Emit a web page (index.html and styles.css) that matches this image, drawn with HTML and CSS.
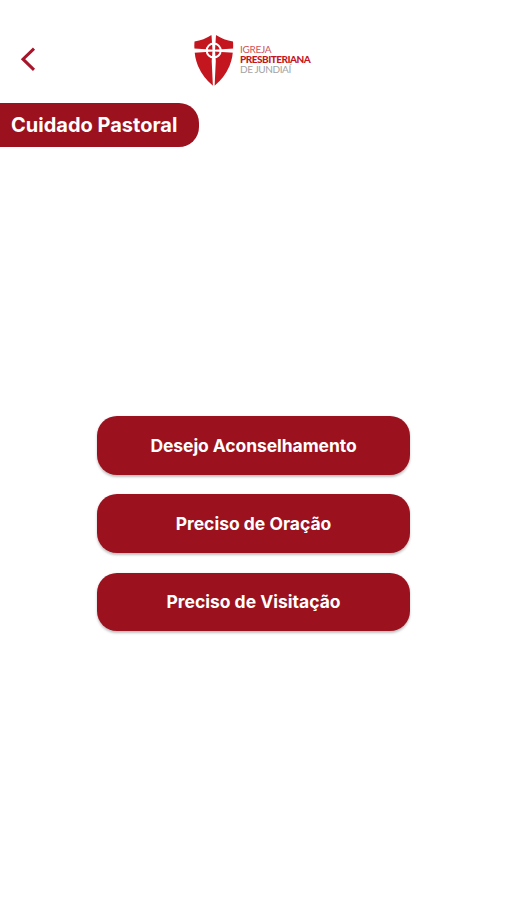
FILE: index.html
```html
<!DOCTYPE html>
<html lang="pt-BR">
<head>
    <meta charset="UTF-8">
    <meta name="viewport" content="width=device-width, initial-scale=1.0">
    <title>Cuidado Pastoral</title>
    <link rel="stylesheet" href="styles.css">
</head>
<body>
    <header class="header">
        <a href="#" class="back-btn" aria-label="Voltar">
            <svg width="16" height="24" viewBox="0 0 16 24" fill="none">
                <path d="M14 1.600L3 12.200L14 22.800" stroke="#a8142a" stroke-width="3"/>
            </svg>
        </a>
        <div class="logo">
            <svg class="shield" width="40" height="51" viewBox="0 0 40 51">
                <path d="M0.500 6.500Q10 5 17 0.300H22.500Q29.500 5 39 6.500Q40 20 35.500 31Q30.500 42.500 20.800 50.500H18.700Q9 42.500 4 31Q-0.500 20 0.500 6.500Z" fill="#c4161f"/>
                <path d="M17.500 0H22L21 15.500L21.800 26L20.600 51H18.900L17.700 26L18.500 15.500Z" fill="#fff"/>
                <path d="M0 13.500L19.700 14.700L40 13.500V17.700L19.700 16.500L0 17.700Z" fill="#fff"/>
                <circle cx="19.700" cy="15.600" r="7" fill="none" stroke="#fff" stroke-width="2"/>
            </svg>
            <div class="logo-text">
                <span class="logo-top">IGREJA</span>
                <span class="logo-name">PRESBITERIANA</span>
                <span class="logo-city">DE JUNDIAÍ</span>
            </div>
        </div>
    </header>

    <h1 class="page-title">Cuidado Pastoral</h1>

    <main class="options">
        <button type="button" class="option-btn option-long">Desejo Aconselhamento</button>
        <button type="button" class="option-btn">Preciso de Oração</button>
        <button type="button" class="option-btn">Preciso de Visitação</button>
    </main>
</body>
</html>
```
FILE: styles.css
```css
* {
    margin: 0;
    padding: 0;
    box-sizing: border-box;
    font-family: 'Inter', sans-serif;
}

body {
    min-height: 100vh;
    background: #fff;
}

.header {
    display: flex;
    align-items: flex-start;
    height: 103.4px;
    padding: 35px 20px 0;
}

.back-btn {
    width: 16px;
    height: 24px;
    margin-top: 12px;
    margin-right: 158px;
}

.back-btn svg,
.shield {
    display: block;
}

.logo {
    display: flex;
}

.logo-text {
    display: flex;
    flex-direction: column;
    margin-left: 6px;
    padding-top: 9px;
}

.logo-text span {
    height: 10px;
    font-family: 'Lato', sans-serif;
    font-size: 10px;
    line-height: 10px;
    white-space: nowrap;
}

.logo-text .logo-top {
    color: #d0525c;
    letter-spacing: -0.3px;
}

.logo-text .logo-name {
    color: #c4161f;
    font-weight: 900;
    letter-spacing: -0.5px;
}

.logo-text .logo-city {
    color: #a3a3a3;
    letter-spacing: -0.4px;
}

.page-title {
    width: 199px;
    height: 44px;
    padding-left: 11px;
    border-radius: 0 20px 20px 0;
    background: #9b111e;
    color: #fff;
    font-size: 20px;
    font-weight: 700;
    line-height: 45px;
    white-space: nowrap;
}

.options {
    display: flex;
    flex-direction: column;
    align-items: center;
    gap: 19.6px;
    padding-top: 268.8px;
}

.option-btn {
    width: 313px;
    height: 58.6px;
    border: none;
    border-radius: 20px;
    background: #9b111e;
    box-shadow: 0 1.5px 2.5px rgba(0, 0, 0, 0.25);
    color: #fff;
    font-size: 17.5px;
    font-weight: 700;
    cursor: pointer;
}

.option-long {
    letter-spacing: -0.08px;
}
```
